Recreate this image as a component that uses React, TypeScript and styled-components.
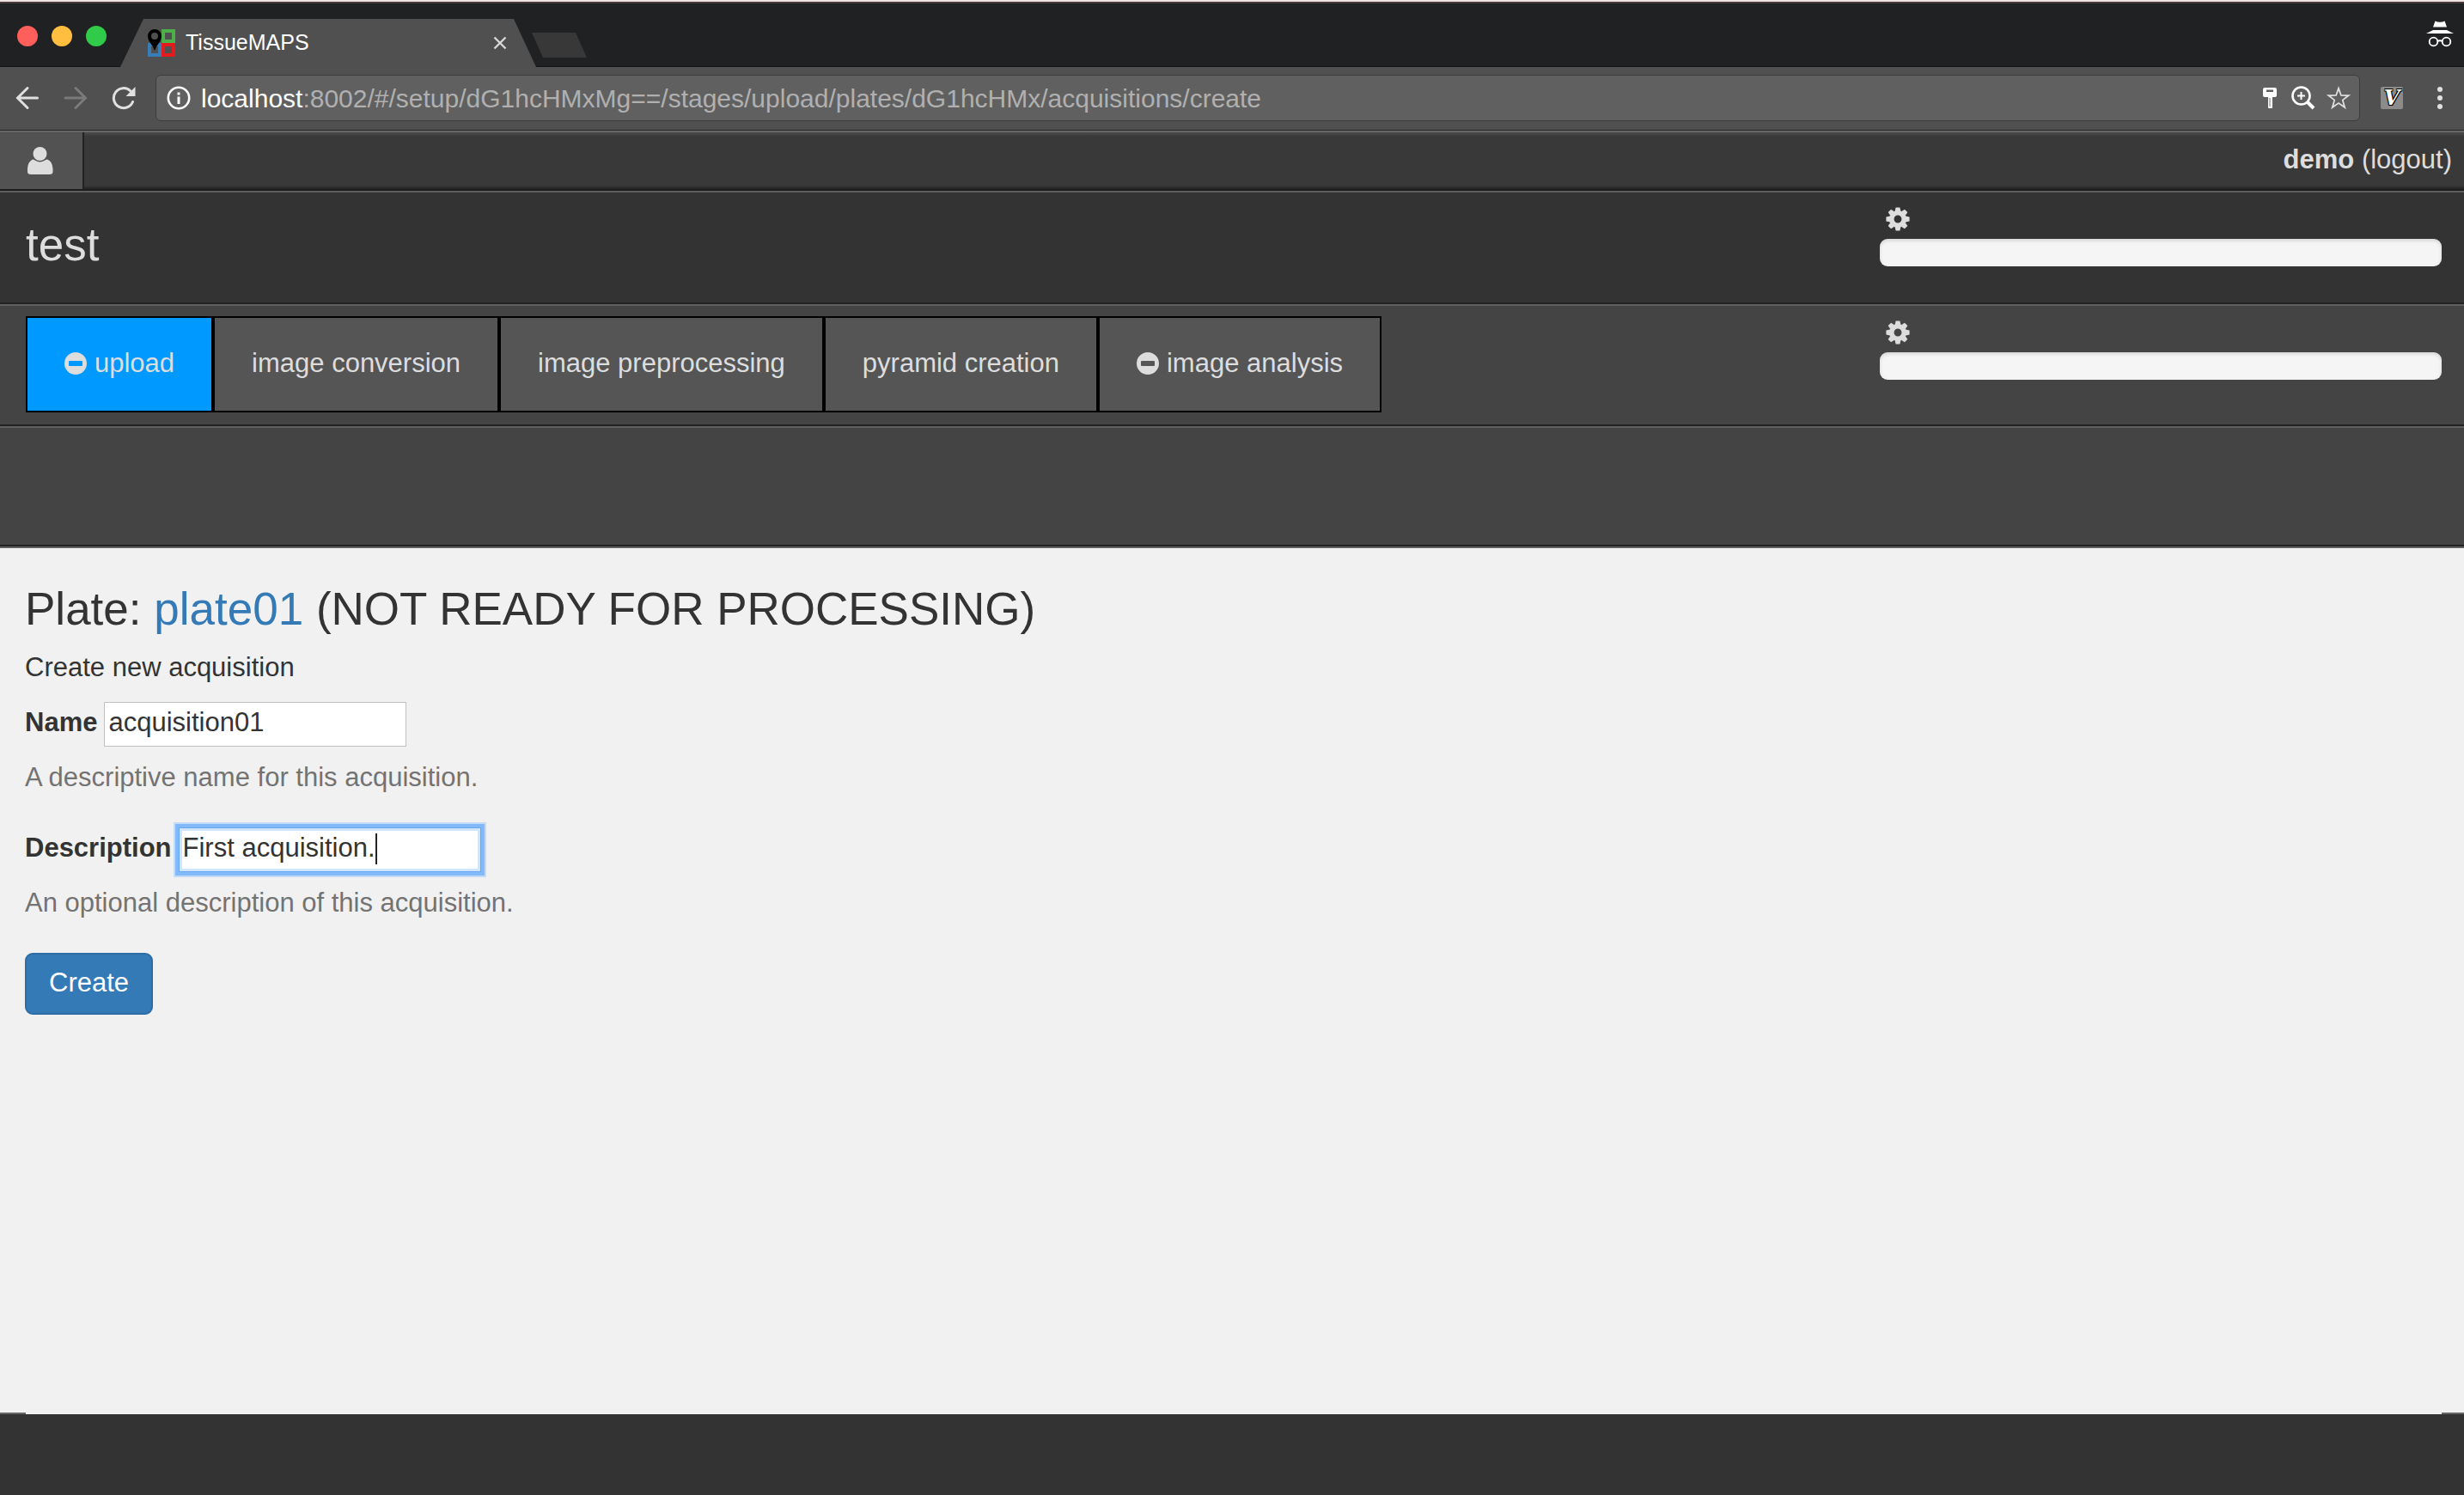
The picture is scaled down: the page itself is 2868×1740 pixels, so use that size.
import React, { useEffect, useRef, useState } from "react";
import styled, { createGlobalStyle, css } from "styled-components";

const GlobalStyle = createGlobalStyle`
  *, *::before, *::after { box-sizing: border-box; }
  body {
    margin: 0;
    background: #333;
    color: #333;
    font: 31px/44px "Liberation Sans", Arial, sans-serif;
  }
  button, input { font: inherit; color: inherit; }
`;

const Page = styled.div`
  display: flex;
  flex-direction: column;
  min-height: 100vh;
`;

/* ---------- browser window ---------- */

const TitleBar = styled.div`
  display: flex;
  align-items: flex-end;
  height: 78px;
  padding-right: 12px;
  background: #202123;
  border-top: 2px solid #f0e2e2;
  box-shadow: inset 0 2px #4b3a3c, inset 0 -1px #141516;
`;

const Lights = styled.div`
  display: flex;
  gap: 16px;
  width: 140px;
  padding: 0 0 24px 20px;
`;

const Light = styled.button<{ $color: string }>`
  width: 24px;
  height: 24px;
  padding: 0;
  border: 0;
  border-radius: 50%;
  background: ${(p) => p.$color};
`;

const BrowserTab = styled.div`
  display: flex;
  align-items: center;
  gap: 12px;
  width: 484px;
  height: 56px;
  padding: 0 34px 0 32px;
  background: #505050;
  clip-path: polygon(27px 0, 458px 0, 484px 100%, 0 100%);
  color: #fff;
  font-size: 25px;
  line-height: 28px;
`;

const TabTitle = styled.span`
  flex: 1;
  padding-bottom: 2px;
`;

const PlainButton = styled.button`
  display: flex;
  padding: 0;
  border: 0;
  background: none;
`;

const NewTab = styled.button`
  width: 64px;
  height: 29px;
  margin: 0 auto 11px -5px;
  padding: 0;
  border: 0;
  background: #383838;
  clip-path: polygon(0 0, 51px 0, 64px 100%, 13px 100%);
`;

const Incognito = styled.svg`
  width: 32px;
  height: 32px;
  margin-bottom: 22px;
`;

const Toolbar = styled.div`
  display: flex;
  align-items: center;
  height: 76px;
  padding: 0 25px 2px 18px;
  background: #505050;
  border-bottom: 2px solid #666;
  box-shadow: inset 0 -1px #252525;
`;

const NavButtons = styled.div`
  display: flex;
  gap: 28px;
  width: 163px;
`;

const AddressBar = styled.div`
  display: flex;
  flex: 1;
  align-items: center;
  gap: 12px;
  height: 54px;
  padding: 0 9px 0 12px;
  background: #606060;
  border: 1px solid #3c3c3c;
  border-radius: 6px;
`;

const Url = styled.span`
  flex: 1;
  padding-top: 2px;
  color: #b0b0b0;
  font-size: 30px;
  line-height: 36px;
`;

const Host = styled.span`
  color: #fff;
`;

const AddressActions = styled.div`
  display: flex;
  gap: 12px;
`;

const Extension = styled.button`
  width: 26px;
  height: 26px;
  margin: 0 40px 0 24px;
  padding: 0;
  border: 0;
  border-radius: 2px;
  background: #8b8b8b;
  color: #fff;
  font: italic bold 24px/24px "DejaVu Serif", serif;
  text-shadow: -1px -1px #000, 1px -1px #000, -1px 1px #000, 1px 1px #000;
`;

/* ---------- application header ---------- */

const UserBar = styled.header`
  display: flex;
  align-items: stretch;
  justify-content: space-between;
  height: 70px;
  padding-right: 14px;
  border-bottom: 2px solid #5e5e5e;
  background: linear-gradient(#4c4c4c, #393939 5px, #393939 62px, #161616 68px);
  color: #ddd;
`;

const UserButton = styled.button`
  display: flex;
  align-items: center;
  width: 98px;
  margin-bottom: 2px;
  padding: 0 0 0 32px;
  border: 0;
  border-right: 2px solid #222;
  background: #525252;
`;

const Account = styled.div`
  line-height: 64px;
`;

const AccountLink = styled.a`
  color: inherit;
  text-decoration: none;
`;

const Band = styled.section<{ $bg: string; $height: number }>`
  display: grid;
  grid-template-columns: 3fr 1fr;
  height: ${(p) => p.$height}px;
  padding: 0 26px 0 30px;
  background: ${(p) => p.$bg};
  border-bottom: 2px solid #606060;
  box-shadow: inset 0 -2px #222;
  color: #ddd;
`;

const bigText = css`
  margin: 0;
  font-size: 53px;
  font-weight: 400;
  line-height: 58px;
`;

const ExperimentName = styled.h1`
  ${bigText}
  padding-top: 32px;
`;

const StatusBox = styled.div`
  display: flex;
  flex-direction: column;
  gap: 9px;
  padding: 17px 0 0 49px;
`;

const GearButton = styled(PlainButton)`
  padding-left: 7px;
`;

const Progress = styled.div`
  height: 32px;
  background: #f5f5f5;
  border-radius: 9px;
  box-shadow: inset 0 2px 4px rgba(0, 0, 0, 0.14);
`;

const Stages = styled.nav`
  display: flex;
  padding-top: 12px;
`;

const Stage = styled.a<{ $active?: boolean }>`
  display: flex;
  align-items: center;
  gap: 9px;
  height: 112px;
  padding: 0 43px 2px;
  border: 2px solid #000;
  background: ${(p) => (p.$active ? "#09f" : "#555")};
  color: #ddd;
  text-decoration: none;
  white-space: nowrap;
`;

/* ---------- acquisition form ---------- */

const Main = styled.main`
  flex: 1;
  padding: 42px 26px 0 29px;
  background: linear-gradient(#666, #666) 0 100% / 30px 2px no-repeat,
    linear-gradient(#666, #666) 100% 100% / 26px 2px no-repeat, #f1f1f1;
`;

const PlateHeading = styled.h2`
  ${bigText}
  margin-bottom: 17px;
`;

const PlateLink = styled.a`
  color: #337ab7;
  text-decoration: none;
`;

const Intro = styled.p`
  margin: 0 0 18px;
`;

const Field = styled.div`
  margin-bottom: 36px;
`;

const FieldRow = styled.div`
  display: flex;
  align-items: center;
  gap: 8px;
`;

const Label = styled.label`
  padding-bottom: 4px;
  font-weight: 700;
  line-height: 44px;
`;

const InputWrap = styled.span`
  position: relative;
  display: flex;
`;

const TextInput = styled.input<{ $focused?: boolean }>`
  width: 352px;
  height: 52px;
  padding: 0 4px 4px;
  border: 1px solid #c0c0c0;
  border-radius: 0;
  outline: 0;
  background: #fff;
  caret-color: transparent;
  ${(p) =>
    p.$focused &&
    css`
      border-color: #6ca6ea;
      box-shadow: inset 0 0 0 3px #cfe5fd, 0 0 0 4px #81b9fb, 0 0 0 6px #c3dbf4;
    `}
`;

const Caret = styled.span`
  position: absolute;
  top: 7px;
  width: 2px;
  height: 36px;
  background: #222;
  pointer-events: none;
`;

const Help = styled.p`
  margin: 14px 0 0;
  color: #737373;
`;

const CreateButton = styled.button`
  height: 72px;
  padding: 0 26px 2px;
  border: 2px solid #2e6da4;
  border-radius: 9px;
  background: #337ab7;
  color: #fff;
`;

const Footer = styled.footer`
  height: 94px;
  background: #333;
`;

/* ---------- icons ---------- */

const Favicon = () => (
  <svg width="32" height="32" viewBox="0 0 32 32">
    <g fill="none" strokeWidth="4">
      <path stroke="#4daf4a" d="M18 2h12v12H18z" />
      <path stroke="#377eb8" d="M2 18h12v12H2z" />
      <path stroke="#e41a1c" d="M18 18h12v12H18z" />
    </g>
    <path d="M8 0a8 8 0 0 1 8 8c0 6-5 9-8 17C5 17 0 14 0 8a8 8 0 0 1 8-8z" />
    <circle cx="8" cy="8" r="4" fill="#505050" />
  </svg>
);

const ArrowLeft = () => (
  <svg width="28" height="28" viewBox="0 0 28 28" fill="none" stroke="#e0e0e0" strokeWidth="3" strokeLinecap="round">
    <path d="M25.500 14H3M14 2.500 2.500 14 14 25.500" />
  </svg>
);

const ArrowRight = () => (
  <svg width="28" height="28" viewBox="0 0 28 28" fill="none" stroke="#7a7a7a" strokeWidth="3" strokeLinecap="round">
    <path d="M2 14h22.500M14 2.500 25.500 14 14 25.500" />
  </svg>
);

const Reload = () => (
  <svg width="28" height="28" viewBox="0 0 28 28">
    <path
      d="M24.500 18.500A11.500 11.500 0 1 1 22 6"
      fill="none"
      stroke="#e0e0e0"
      strokeWidth="3"
      strokeLinecap="round"
    />
    <path d="M27.500 1v11H16.500z" fill="#e0e0e0" />
  </svg>
);

const Info = () => (
  <svg width="28" height="28" viewBox="0 0 28 28">
    <circle cx="14" cy="14" r="12.200" fill="none" stroke="#fff" strokeWidth="2.600" />
    <path d="M12.500 7.500h3v3h-3zM12.500 12.500h3v8.500h-3z" fill="#fff" />
  </svg>
);

const KeyIcon = () => (
  <svg width="24" height="28" viewBox="0 0 24 28">
    <path
      fill="#fff"
      fillRule="evenodd"
      d="M5 2h12q2 0 2 2v7q0 2-2 2h-3v12q0 1-1 1h-3q-1 0-1-1V13H5q-2 0-2-2V4q0-2 2-2zm2 2.500V7h8V4.500z"
    />
    <path d="M11 14v10" stroke="#777" strokeWidth="1" />
  </svg>
);

const ZoomIcon = () => (
  <svg width="28" height="28" viewBox="0 0 28 28" fill="none" stroke="#fff">
    <circle cx="11.500" cy="11.500" r="10" strokeWidth="2.600" />
    <path d="M11.500 7v9M7 11.500h9" strokeWidth="2" />
    <path d="m18.500 18.500 7.500 7.500" strokeWidth="4" />
  </svg>
);

const starPath = (outer: number, inner: number) =>
  "M" +
  Array.from({ length: 10 }, (_, i) => {
    const r = i % 2 ? inner : outer;
    const a = (i * Math.PI) / 5;
    return `${(r * Math.sin(a)).toFixed(2)} ${(-r * Math.cos(a)).toFixed(2)}`;
  }).join("L") +
  "z";

const StarIcon = () => (
  <svg width="30" height="28" viewBox="-15 -15 30 28">
    <path d={starPath(15, 6) + starPath(9.5, 4)} fill="#e0e0e0" fillRule="evenodd" />
  </svg>
);

const Dots = () => (
  <svg width="6" height="28" viewBox="0 0 6 28" fill="#e0e0e0">
    <circle cx="3" cy="4" r="3" />
    <circle cx="3" cy="14" r="3" />
    <circle cx="3" cy="24" r="3" />
  </svg>
);

const UserIcon = () => (
  <svg width="30" height="32" viewBox="0 0 30 32" fill="#ddd">
    <circle cx="14.500" cy="8" r="8" />
    <path d="M6 14.500q2 .3 3 1.200 5.500 3.600 11 0 1-1 3-1.200 6 2 6.500 11V29q0 3-4 3H4q-4 0-4-3v-3.500Q.500 17 6 14.500z" />
  </svg>
);

const teeth = [0, 45, 90, 135, 180, 225, 270, 315];

const Gear = () => (
  <svg width="28" height="28" viewBox="-14 -14 28 28" fill="#ddd">
    <circle r="7.200" fill="none" stroke="#ddd" strokeWidth="5.500" />
    {teeth.map((a) => (
      <path key={a} transform={`rotate(${a})`} d="M-3.400-9h6.800L2.400-13.600h-4.800z" />
    ))}
  </svg>
);

const Minus = () => (
  <svg width="26" height="26" viewBox="0 0 26 26">
    <path
      fill="#ddd"
      fillRule="evenodd"
      d="M13 0a13 13 0 1 1 0 26 13 13 0 0 1 0-26zM6 10q-1 0-1 1v4q0 1 1 1h14q1 0 1-1v-4q0-1-1-1z"
    />
  </svg>
);

/* ---------- page ---------- */

const stages = [
  { name: "upload", minus: true, active: true },
  { name: "image conversion" },
  { name: "image preprocessing" },
  { name: "pyramid creation" },
  { name: "image analysis", minus: true },
];

const Status = ({ label }: { label: string }) => (
  <StatusBox>
    <GearButton aria-label={`${label} settings`}>
      <Gear />
    </GearButton>
    <Progress role="progressbar" aria-label={label} aria-valuenow={0} />
  </StatusBox>
);

const textWidth = (el: HTMLInputElement) => {
  const ctx = document.createElement("canvas").getContext("2d");
  if (!ctx) return 0;
  const style = getComputedStyle(el);
  ctx.font = `${style.fontSize} ${style.fontFamily}`;
  return Math.round(ctx.measureText(el.value).width);
};

export default function App() {
  const [name, setName] = useState("acquisition01");
  const [description, setDescription] = useState("First acquisition.");
  const [caret, setCaret] = useState(0);
  const descriptionRef = useRef<HTMLInputElement>(null);

  useEffect(() => {
    if (descriptionRef.current) setCaret(textWidth(descriptionRef.current) + 5);
  }, [description]);

  return (
    <Page>
      <GlobalStyle />
      <TitleBar>
        <Lights>
          <Light $color="#ff5f5a" aria-label="Close window" />
          <Light $color="#ffbe3f" aria-label="Minimize window" />
          <Light $color="#30cb48" aria-label="Zoom window" />
        </Lights>
        <BrowserTab>
          <Favicon />
          <TabTitle>TissueMAPS</TabTitle>
          <PlainButton aria-label="Close tab">
            <svg width="16" height="16" viewBox="0 0 16 16" stroke="#d8d8d8" strokeWidth="2.400">
              <path d="m1.500 1.500 13 13M14.500 1.500l-13 13" />
            </svg>
          </PlainButton>
        </BrowserTab>
        <NewTab aria-label="New tab" />
        <Incognito viewBox="0 0 32 32" fill="#fff">
          <path d="M10.500.500q5.500 2.500 11 0L24 7.500H8zM8 11h16l8 4H0z" />
          <g fill="none" stroke="#fff" strokeWidth="1.800">
            <circle cx="8.500" cy="24.500" r="4.800" />
            <circle cx="23.500" cy="24.500" r="4.800" />
            <path d="M13 24q3-1.500 6 0" />
          </g>
        </Incognito>
      </TitleBar>
      <Toolbar>
        <NavButtons>
          <PlainButton aria-label="Back"><ArrowLeft /></PlainButton>
          <PlainButton aria-label="Forward"><ArrowRight /></PlainButton>
          <PlainButton aria-label="Reload"><Reload /></PlainButton>
        </NavButtons>
        <AddressBar>
          <Info />
          <Url>
            <Host>localhost</Host>
            :8002/#/setup/dG1hcHMxMg==/stages/upload/plates/dG1hcHMx/acquisitions/create
          </Url>
          <AddressActions>
            <PlainButton aria-label="Saved passwords"><KeyIcon /></PlainButton>
            <PlainButton aria-label="Page zoom"><ZoomIcon /></PlainButton>
            <PlainButton aria-label="Bookmark"><StarIcon /></PlainButton>
          </AddressActions>
        </AddressBar>
        <Extension>V</Extension>
        <PlainButton aria-label="Menu"><Dots /></PlainButton>
      </Toolbar>

      <UserBar>
        <UserButton aria-label="User"><UserIcon /></UserButton>
        <Account>
          <b>demo</b> <AccountLink href="#logout">(logout)</AccountLink>
        </Account>
      </UserBar>
      <Band $bg="#333" $height={132}>
        <ExperimentName>test</ExperimentName>
        <Status label="Experiment progress" />
      </Band>
      <Band $bg="#444" $height={142}>
        <Stages>
          {stages.map((s) => (
            <Stage key={s.name} href={`#${s.name}`} $active={s.active}>
              {s.minus && <Minus />}
              {s.name}
            </Stage>
          ))}
        </Stages>
        <Status label="Stage progress" />
      </Band>
      <Band $bg="#444" $height={140} />

      <Main>
        <PlateHeading>
          Plate: <PlateLink href="#plate01">plate01</PlateLink> (NOT READY FOR PROCESSING)
        </PlateHeading>
        <Intro>Create new acquisition</Intro>
        <form onSubmit={(e) => e.preventDefault()}>
          <Field>
            <FieldRow>
              <Label htmlFor="name">Name</Label>
              <TextInput id="name" value={name} onChange={(e) => setName(e.target.value)} />
            </FieldRow>
            <Help>A descriptive name for this acquisition.</Help>
          </Field>
          <Field>
            <FieldRow>
              <Label htmlFor="description">Description</Label>
              <InputWrap>
                <TextInput
                  id="description"
                  ref={descriptionRef}
                  $focused
                  value={description}
                  onChange={(e) => setDescription(e.target.value)}
                />
                <Caret style={{ left: caret }} />
              </InputWrap>
            </FieldRow>
            <Help>An optional description of this acquisition.</Help>
          </Field>
          <CreateButton type="submit">Create</CreateButton>
        </form>
      </Main>
      <Footer />
    </Page>
  );
}
